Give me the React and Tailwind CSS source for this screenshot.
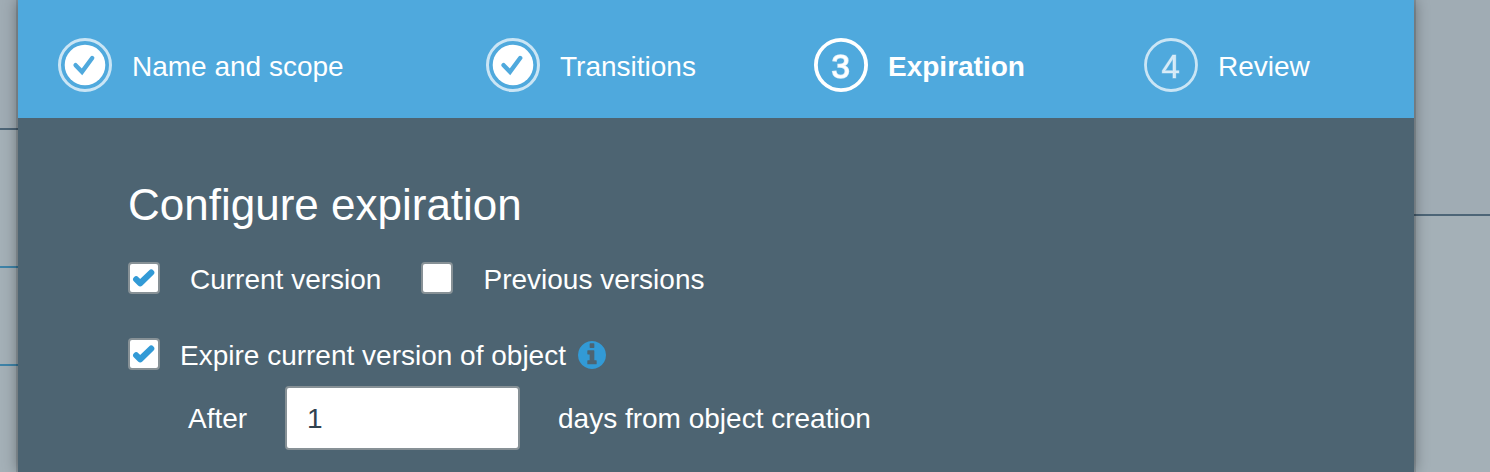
function StepIcon({ number, done, active }) {
  if (done) {
    return (
      <svg className="size-[54px] shrink-0 blur-[0.4px]" viewBox="0 0 54 54" fill="none">
        <circle cx="27" cy="27" r="25.5" stroke="#fff" strokeOpacity="0.7" strokeWidth="3" />
        <circle cx="27" cy="27" r="20.3" fill="#fff" />
        <path d="M17.6 27.2 L24 33.8 L34.2 20" stroke="#4fa9dd" strokeWidth="4.4" strokeLinecap="round" />
      </svg>
    );
  }
  return (
    <svg className="size-[54px] shrink-0 blur-[0.4px]" viewBox="0 0 54 54" fill="none">
      {active ? (
        <circle cx="27" cy="27" r="25.1" stroke="#fff" strokeWidth="3.8" />
      ) : (
        <circle cx="27" cy="27" r="25.5" stroke="#fff" strokeOpacity="0.7" strokeWidth="2.8" />
      )}
      <text
        x="26.6"
        y="39.5"
        textAnchor="middle"
        fill="#fff"
        fillOpacity={active ? 1 : 0.75}
        stroke="#fff"
        strokeOpacity={active ? 0.8 : 0.35}
        strokeWidth={active ? 1.6 : 1}
        className="font-['Liberation_Sans',Arial,sans-serif] text-[33px]"
      >
        {number}
      </text>
    </svg>
  );
}

function Step({ label, className, ...icon }) {
  return (
    <li className={"flex shrink-0 items-center gap-5 " + className}>
      <StepIcon {...icon} />
      <span className={"mt-[3px] whitespace-nowrap " + (icon.active ? "font-bold" : "")}>{label}</span>
    </li>
  );
}

function Checkbox({ checked }) {
  return (
    <span
      role="checkbox"
      aria-checked={checked}
      className="flex size-8 shrink-0 items-center justify-center rounded-[4px] border-2 border-[#879196] bg-white"
    >
      {checked && (
        <svg className="size-7" viewBox="0 0 28 28" fill="none">
          <path
            d="M6.2 15.4 L10.2 19.3 L21.2 8.6"
            stroke="#329ad6"
            strokeWidth="6.2"
            strokeLinecap="round"
            strokeLinejoin="round"
          />
        </svg>
      )}
    </span>
  );
}

function InfoIcon({ className }) {
  return (
    <svg className={className} viewBox="0 128 1536 1536" fill="currentColor">
      <path d="M1024 1376v-160q0-14-9-23t-23-9h-96v-512q0-14-9-23t-23-9h-320q-14 0-23 9t-9 23v160q0 14 9 23t23 9h96v320h-96q-14 0-23 9t-9 23v160q0 14 9 23t23 9h448q14 0 23-9t9-23zm-128-896v-192q0-14-9-23t-23-9h-192q-14 0-23 9t-9 23v192q0 14 9 23t23 9h192q14 0 23-9t9-23zm640 416q0 209-103 385.5t-279.5 279.5-385.5 103-385.5-103-279.5-279.5-103-385.5 103-385.5 279.5-279.5 385.5-103 385.5 103 279.5 279.5 103 385.5z" />
    </svg>
  );
}

export default function App() {
  return (
    <div className="flex h-[472px] w-[1490px] overflow-hidden bg-[#a4b0b7] font-['Liberation_Sans',Arial,sans-serif] text-[28px] leading-8 text-white">
      <div className="flex w-[18px] shrink-0 flex-col">
        <div className="h-[130px] border-b-2 border-[#4d6577] bg-[#a0acb4]" />
        <div className="h-[138px] border-b-2 border-[#3e83a8]" />
        <div className="h-[98px] border-b-2 border-[#3e83a8]" />
      </div>

      <main className="relative w-[1396px] shrink-0 bg-[#4d6472] shadow-[0_0_0_2px_rgba(0,0,0,0.12),0_0_14px_rgba(0,0,0,0.4)]">
        <ol className="flex h-[118px] items-start bg-[#4fa9dd] pt-[38px] pl-10">
          <Step className="w-[428px]" label="Name and scope" done />
          <Step className="w-[328px]" label="Transitions" done />
          <Step className="w-[330px]" label="Expiration" number="3" active />
          <Step className="" label="Review" number="4" />
        </ol>

        <section className="pl-[110px]">
          <h1 className="pt-[62px] text-[44px] leading-[50px] whitespace-nowrap">Configure expiration</h1>

          <div className="mt-8 flex">
            <label className="flex w-[293px]">
              <Checkbox checked />
              <span className="mt-0.5 ml-[30px] whitespace-nowrap">Current version</span>
            </label>
            <label className="flex">
              <Checkbox checked={false} />
              <span className="mt-0.5 ml-[30.5px] whitespace-nowrap">Previous versions</span>
            </label>
          </div>

          <div className="mt-[42px] flex">
            <Checkbox checked />
            <span className="mt-0.5 ml-5 whitespace-nowrap">Expire current version of object</span>
            <InfoIcon className="mt-[3px] ml-3 size-7 text-[#329ad6]" />
          </div>

          <div className="mt-[14px] flex h-16 items-center pl-[60px]">
            <span className="mt-px w-[97px]">After</span>
            <input
              defaultValue="1"
              className="h-16 w-[235px] rounded-[4px] border-2 border-[#879196] bg-white px-5 pt-0.5 text-[#30424f] outline-none"
            />
            <span className="mt-px ml-[38px] whitespace-nowrap">days from object creation</span>
          </div>
        </section>
      </main>

      <div className="flex w-[76px] shrink-0 flex-col">
        <div className="h-[216px] border-b-2 border-[#4d6577] bg-[#a0acb4]" />
      </div>
    </div>
  );
}
